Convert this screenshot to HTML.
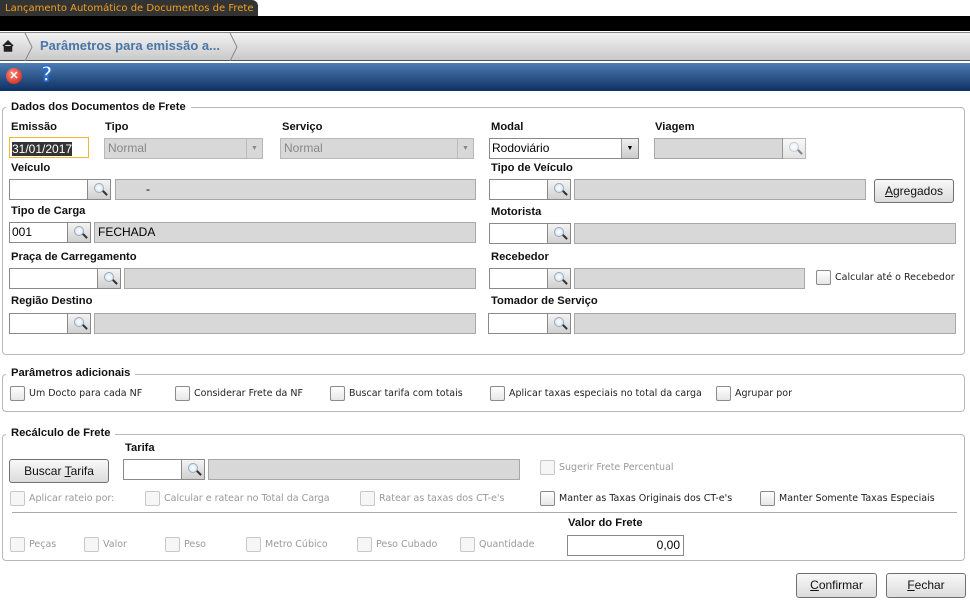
<!DOCTYPE html>
<html><head><meta charset="utf-8"><style>
*{box-sizing:border-box;margin:0;padding:0}
body{width:970px;height:602px;position:relative;background:#fff;font-family:"Liberation Sans",Arial,sans-serif;overflow:hidden}
.a{position:absolute}
.lb{position:absolute;font-weight:bold;font-size:11.2px;color:#111}
.in{position:absolute;height:21px;border:1px solid #8a8a8a;background:#fff;font-size:12px;line-height:19px;padding-left:2px;color:#000}
.gr{position:absolute;height:21px;border:1px solid #a8a8a8;background:#d8d8d8;font-size:12px;line-height:19px;padding-left:3px}
.lk{position:absolute;height:21px;width:24px;border:1px solid #8a8a8a;background:linear-gradient(#f4f4f4,#d0d0d0)}
.lk:before{content:"";position:absolute;left:6px;top:3px;width:8px;height:8px;border:1.5px solid #9ab;border-radius:50%;background:radial-gradient(#fff,#cde)}
.lk:after{content:"";position:absolute;left:14px;top:12px;width:6px;height:2px;background:#333;transform:rotate(45deg)}
.fs{position:absolute;border:1px solid #b8b8b8;border-radius:4px}
.lg{position:absolute;background:#fff;padding:0 5px;font-weight:bold;font-size:11.2px;color:#111}
.cb{position:absolute;font-family:"DejaVu Sans",Verdana,sans-serif;font-size:9.5px;color:#222;line-height:14px;padding-left:19px;padding-top:1px;white-space:nowrap}
.cb:before{content:"";position:absolute;left:0;top:0;width:13px;height:13px;border:1px solid #8b8b8b;border-radius:2px;background:linear-gradient(#fff,#e6e6e6)}
.cb.d{color:#999}.cb.d:before{border-color:#c8c8c8;background:#f6f6f6}
.bt{position:absolute;border:1px solid #707070;border-radius:3px;background:linear-gradient(#f8f8f8,#dcdcdc);font-size:12px;text-align:center;color:#111}
u{text-decoration:underline}
</style></head><body>
<div class="a" style="left:0;top:0;width:970px;height:16px;background:#fff"></div>
<div class="a" style="left:0;top:0;width:258px;height:17px;background:#333;border-radius:0 6px 0 0;color:#f0a020;line-height:17px;padding-left:5px;font-family:'DejaVu Sans',Verdana,sans-serif;font-size:10px;white-space:nowrap;overflow:hidden">Lançamento Automático de Documentos de Frete</div>
<div class="a" style="left:0;top:16px;width:970px;height:15px;background:#000"></div>
<div class="a" style="left:0;top:32px;width:970px;height:1px;background:#888"></div>
<div class="a" style="left:0;top:33px;width:970px;height:27px;background:linear-gradient(#f2f2f2,#c9c9c9)"></div>
<div class="a" style="left:0;top:60px;width:970px;height:1px;background:#555"></div>
<svg class="a" style="left:0;top:33px" width="240" height="28"><path d="M3 13 L8 8 L13 13 M4.5 12 V18 H11.5 V12" fill="#222" stroke="#222" stroke-width="1.5"/><path d="M25 0 L32 14 L25 28 M230 0 L237 14 L230 28" fill="none" stroke="#888"/></svg>
<div class="a" style="left:40px;top:38px;font-weight:bold;font-size:13px;color:#4a76a8">Parâmetros para emissão a...</div>
<div class="a" style="left:0;top:63px;width:970px;height:28px;background:linear-gradient(#4d7cb2,#0e3062)"></div>
<div class="a" style="left:6px;top:68px;width:16px;height:16px;border-radius:50%;background:radial-gradient(circle at 40% 35%,#ff8a7a,#c41a10);color:#fff;font-weight:bold;font-size:11px;text-align:center;line-height:16px">✕</div>
<div class="a" style="left:41px;top:62px;color:#fff;font-weight:bold;font-size:20px;font-family:'DejaVu Sans';-webkit-text-stroke:1.5px #2a6fd0">?</div>

<div class="fs" style="left:2px;top:107px;width:963px;height:248px"></div>
<div class="lg" style="left:6px;top:101px">Dados dos Documentos de Frete</div>
<div class="lb" style="left:11px;top:121px">Emissão</div>
<div class="lb" style="left:105px;top:121px">Tipo</div>
<div class="lb" style="left:282px;top:121px">Serviço</div>
<div class="lb" style="left:491px;top:121px">Modal</div>
<div class="lb" style="left:655px;top:121px">Viagem</div>
<div class="in" style="left:9px;top:137px;width:80px;border-color:#f0b830;padding:2px"><span style="background:#333;color:#fff;display:inline-block;line-height:14px">31/01/2017</span></div>
<div class="gr" style="left:104px;top:138px;width:159px;color:#888;border-color:#b8b8b8">Normal<span class="a" style="right:0;top:0;width:16px;height:19px;border-left:1px solid #bbb;font-size:7px;text-align:center">▼</span></div>
<div class="gr" style="left:280px;top:138px;width:194px;color:#888;border-color:#b8b8b8">Normal<span class="a" style="right:0;top:0;width:16px;height:19px;border-left:1px solid #bbb;font-size:7px;text-align:center">▼</span></div>
<div class="in" style="left:489px;top:138px;width:150px">Rodoviário<span class="a" style="right:0;top:0;width:17px;height:19px;border-left:1px solid #999;background:linear-gradient(#eee,#ccc);font-size:7px;text-align:center">▼</span></div>
<div class="gr" style="left:654px;top:138px;width:129px"></div><div class="lk" style="left:782px;top:138px;opacity:.6"></div>

<div class="lb" style="left:11px;top:162px">Veículo</div>
<div class="lb" style="left:491px;top:162px">Tipo de Veículo</div>
<div class="in" style="left:9px;top:179px;width:79px"></div><div class="lk" style="left:87px;top:179px"></div>
<div class="gr" style="left:115px;top:179px;width:361px;padding-left:30px">-</div>
<div class="in" style="left:489px;top:179px;width:59px"></div><div class="lk" style="left:547px;top:179px"></div>
<div class="gr" style="left:574px;top:179px;width:292px"></div>
<div class="bt" style="left:874px;top:179px;width:80px;height:24px;line-height:22px"><u>A</u>gregados</div>

<div class="lb" style="left:11px;top:205px">Tipo de Carga</div>
<div class="lb" style="left:491px;top:206px">Motorista</div>
<div class="in" style="left:9px;top:222px;width:59px">001</div><div class="lk" style="left:67px;top:222px"></div>
<div class="gr" style="left:94px;top:222px;width:382px">FECHADA</div>
<div class="in" style="left:489px;top:223px;width:59px"></div><div class="lk" style="left:547px;top:223px"></div>
<div class="gr" style="left:574px;top:223px;width:382px"></div>

<div class="lb" style="left:11px;top:251px">Praça de Carregamento</div>
<div class="lb" style="left:491px;top:251px">Recebedor</div>
<div class="in" style="left:9px;top:268px;width:89px"></div><div class="lk" style="left:97px;top:268px"></div>
<div class="gr" style="left:124px;top:268px;width:352px"></div>
<div class="in" style="left:489px;top:268px;width:59px"></div><div class="lk" style="left:547px;top:268px"></div>
<div class="gr" style="left:574px;top:268px;width:231px"></div>
<div class="cb" style="left:816px;top:270px">Calcular até o Recebedor</div>

<div class="lb" style="left:11px;top:295px">Região Destino</div>
<div class="lb" style="left:491px;top:295px">Tomador de Serviço</div>
<div class="in" style="left:9px;top:313px;width:59px"></div><div class="lk" style="left:67px;top:313px"></div>
<div class="gr" style="left:94px;top:313px;width:382px"></div>
<div class="in" style="left:488px;top:313px;width:60px"></div><div class="lk" style="left:547px;top:313px"></div>
<div class="gr" style="left:574px;top:313px;width:382px"></div>

<div class="fs" style="left:2px;top:374px;width:963px;height:38px"></div>
<div class="lg" style="left:6px;top:367px">Parâmetros adicionais</div>
<div class="cb" style="left:10px;top:386px">Um Docto para cada NF</div>
<div class="cb" style="left:175px;top:386px">Considerar Frete da NF</div>
<div class="cb" style="left:330px;top:386px">Buscar tarifa com totais</div>
<div class="cb" style="left:490px;top:386px">Aplicar taxas especiais no total da carga</div>
<div class="cb" style="left:716px;top:386px">Agrupar por</div>

<div class="fs" style="left:2px;top:434px;width:963px;height:127px"></div>
<div class="lg" style="left:6px;top:427px">Recálculo de Frete</div>
<div class="lb" style="left:125px;top:442px">Tarifa</div>
<div class="bt" style="left:9px;top:459px;width:100px;height:24px;line-height:22px">Buscar <u>T</u>arifa</div>
<div class="in" style="left:123px;top:459px;width:59px"></div><div class="lk" style="left:181px;top:459px"></div>
<div class="gr" style="left:208px;top:459px;width:312px"></div>
<div class="cb d" style="left:540px;top:460px">Sugerir Frete Percentual</div>
<div class="cb d" style="left:10px;top:491px">Aplicar rateio por:</div>
<div class="cb d" style="left:145px;top:491px">Calcular e ratear no Total da Carga</div>
<div class="cb d" style="left:360px;top:491px">Ratear as taxas dos CT-e's</div>
<div class="cb" style="left:540px;top:491px">Manter as Taxas Originais dos CT-e's</div>
<div class="cb" style="left:760px;top:491px">Manter Somente Taxas Especiais</div>
<div class="a" style="left:12px;top:512px;width:945px;height:1px;background:#aaa"></div>
<div class="lb" style="left:568px;top:517px">Valor do Frete</div>
<div class="cb d" style="left:10px;top:537px">Peças</div>
<div class="cb d" style="left:84px;top:537px">Valor</div>
<div class="cb d" style="left:165px;top:537px">Peso</div>
<div class="cb d" style="left:246px;top:537px">Metro Cúbico</div>
<div class="cb d" style="left:357px;top:537px">Peso Cubado</div>
<div class="cb d" style="left:460px;top:537px">Quantidade</div>
<div class="in" style="left:567px;top:535px;width:117px;height:21px;text-align:right;padding-right:3px">0,00</div>

<div class="bt" style="left:796px;top:573px;width:81px;height:25px;line-height:23px"><u>C</u>onfirmar</div>
<div class="bt" style="left:886px;top:573px;width:80px;height:25px;line-height:23px"><u>F</u>echar</div>
</body></html>
